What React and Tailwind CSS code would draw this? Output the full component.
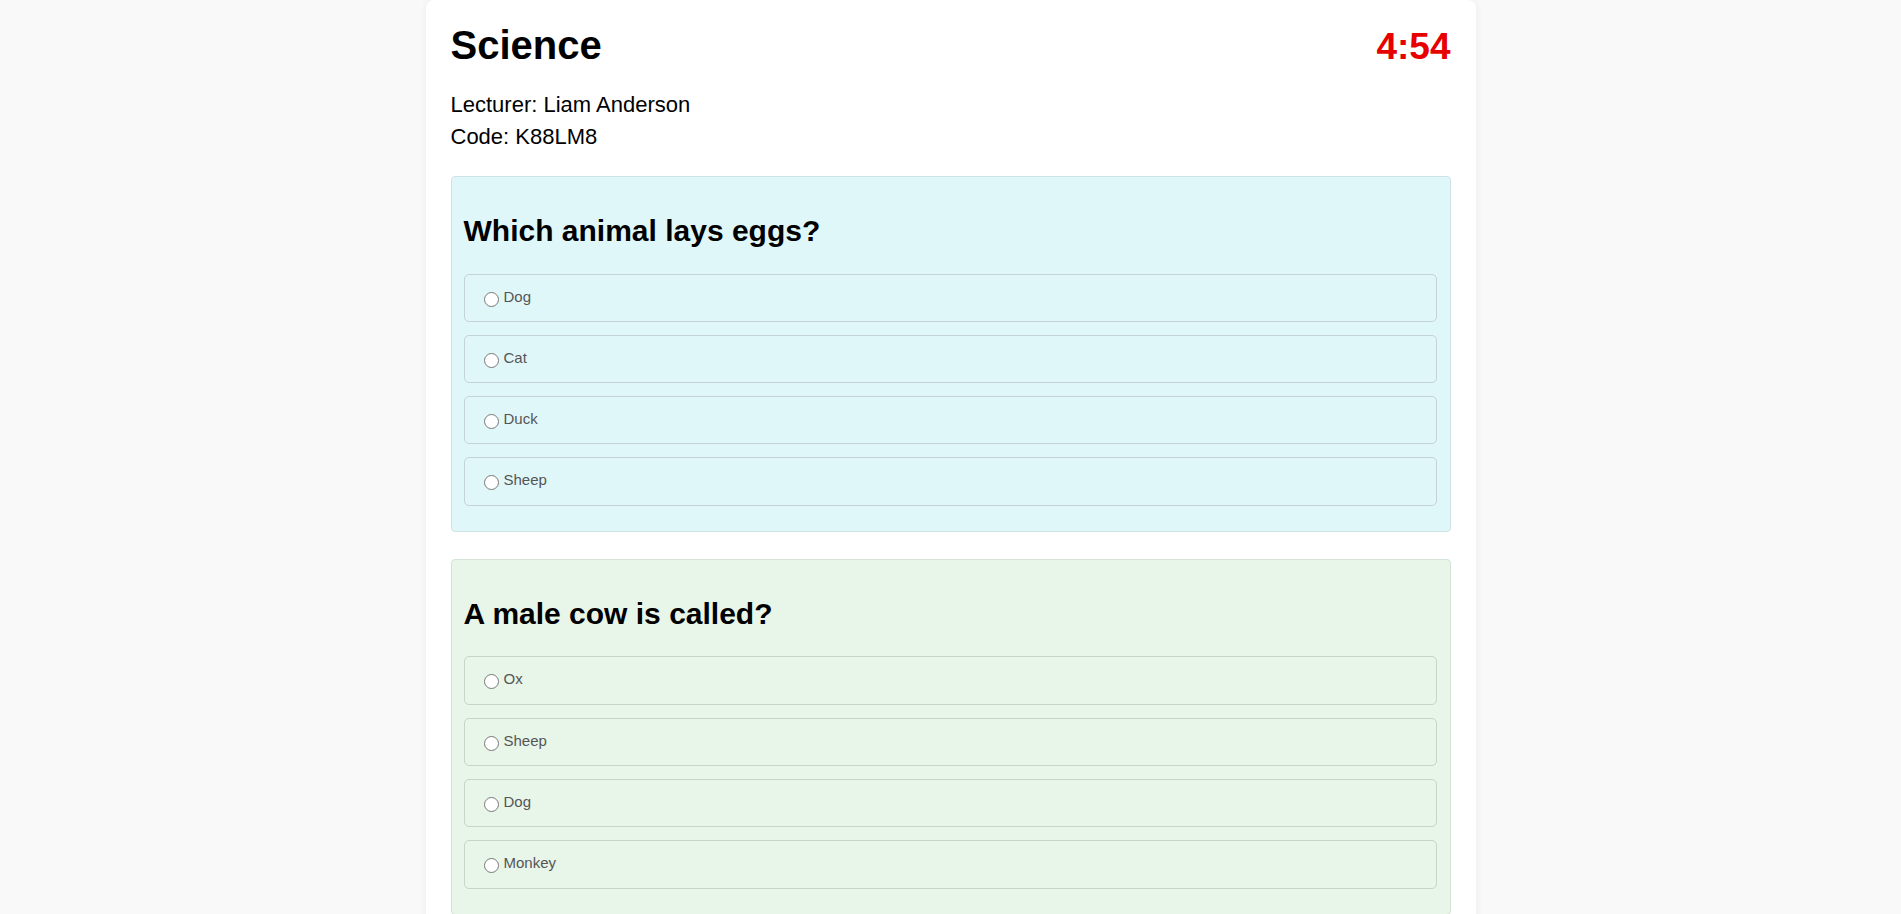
import { useState } from "react";

const questions = [
  {
    title: "Which animal lays eggs?",
    options: ["Dog", "Cat", "Duck", "Sheep"],
    bg: "bg-[#e0f7fa]",
    border: "border-[#cfe3e6]",
    optBorder: "border-[#c3d3d6]",
  },
  {
    title: "A male cow is called?",
    options: ["Ox", "Sheep", "Dog", "Monkey"],
    bg: "bg-[#e8f5e9]",
    border: "border-[#d3e3d5]",
    optBorder: "border-[#c6d5c8]",
  },
];

function Question({ q, index, answer, onPick }) {
  return (
    <div className={`mb-[27px] rounded-[4px] border ${q.border} ${q.bg} p-[12px]`}>
      <h2 className="mt-[25px] mb-[25px] text-[30px] font-bold leading-[34.5px] text-black">
        {q.title}
      </h2>
      {q.options.map((opt) => (
        <label
          key={opt}
          className={`mr-[1px] mb-[13px] flex h-[48.33px] items-start rounded-[5px] border ${q.optBorder} pt-[13px] pl-[15px]`}
        >
          <input
            type="radio"
            name={"q" + index}
            checked={answer === opt}
            onChange={() => onPick(opt)}
            className="m-0 mt-[4px] ml-[4px] h-[15px] w-[15px]"
          />
          <span className="ml-[5px] text-[15px] leading-[17px] text-[#555]">{opt}</span>
        </label>
      ))}
    </div>
  );
}

export default function App() {
  const [answers, setAnswers] = useState({});

  return (
    <div className="min-h-screen bg-[#f9f9f9] font-['Liberation_Sans',Arial,sans-serif]">
      <div className="mx-auto w-[1050px] rounded-lg bg-white px-[25px] pb-[25px] shadow-[0_0_10px_rgba(0,0,0,0.06)]">
        {/* header */}
        <div className="flex items-baseline justify-between pt-[22px]">
          <h1 className="text-[40px] font-bold leading-[46px] text-black">Science</h1>
          <div className="text-[37px] font-bold leading-[46px] text-[#e60000]">4:54</div>
        </div>
        <div className="mt-[19px] text-[22px] leading-[32px] text-black">
          <p>Lecturer: Liam Anderson</p>
          <p>Code: K88LM8</p>
        </div>

        {/* questions */}
        <div className="mt-[23px]">
          {questions.map((q, i) => (
            <Question
              key={i}
              q={q}
              index={i}
              answer={answers[i]}
              onPick={(opt) => setAnswers({ ...answers, [i]: opt })}
            />
          ))}
        </div>
      </div>
    </div>
  );
}
